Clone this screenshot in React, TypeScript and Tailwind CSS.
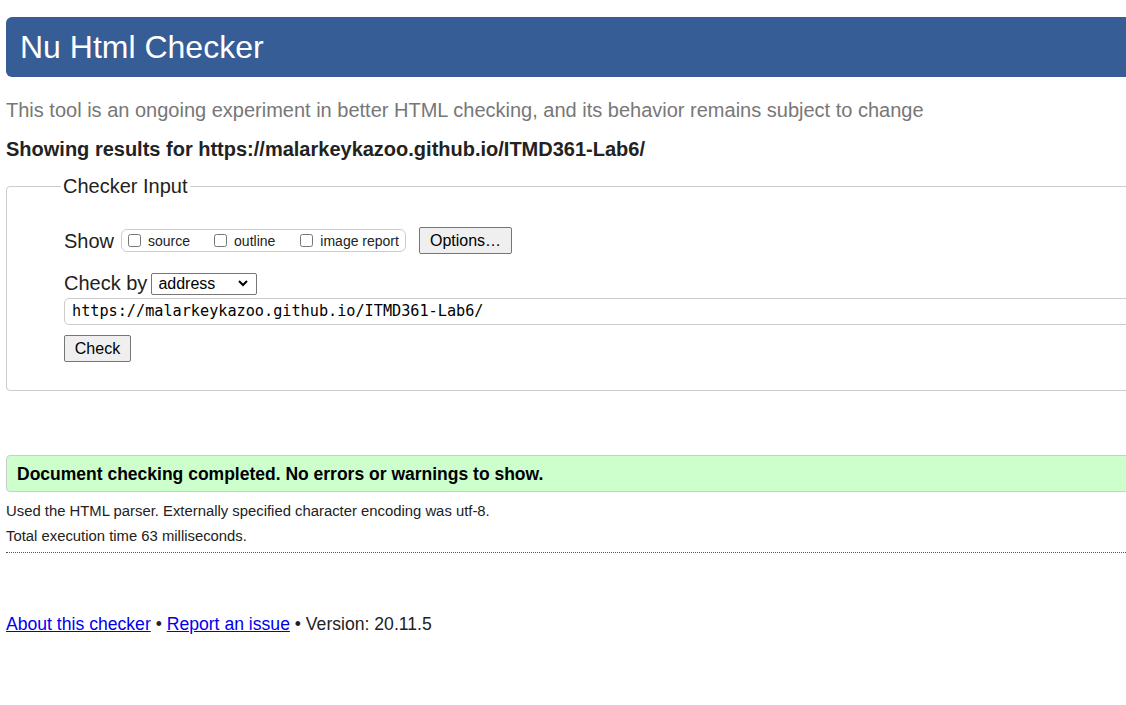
const sans = { fontFamily: '"Liberation Sans", Arial, sans-serif' };

function Check({ label }: { label: string }) {
  return (
    <label className="flex items-center">
      <input type="checkbox" className="m-0 h-[13px] w-[13px]" />
      <span className="ml-[7px] text-[14px] leading-[16px]">{label}</span>
    </label>
  );
}

function NativeButton({ children, className }: { children: React.ReactNode; className: string }) {
  return (
    <button
      className={`h-[27px] rounded-[2px] border border-[#767676] bg-[#efefef] text-[16px] leading-[18px] text-black ${className}`}
    >
      {children}
    </button>
  );
}

export default function App() {
  return (
    <div className="w-[1126px] overflow-hidden bg-white text-[#222]" style={sans}>
      <div className="w-[1180px] px-[6px] pb-[60px]">
        <header className="mt-[17px] flex h-[60px] items-center rounded-l-[6px] bg-[#365d95] pl-[14px]">
          <h1 className="text-[32px] leading-[36px] text-white">Nu Html Checker</h1>
        </header>

        <p className="mt-[21px] text-[20px] leading-[24px] text-[#777]">
          This tool is an ongoing experiment in better HTML checking, and its behavior remains subject to change
        </p>
        <p className="mt-[15px] text-[20px] font-bold leading-[24px]">
          Showing results for https://malarkeykazoo.github.io/ITMD361-Lab6/
        </p>

        <fieldset className="mt-[13px] rounded-[4px] border border-[#ccc] pb-[28px] pl-[54px]">
          <legend className="px-[2px] text-[20px] leading-[24px]">Checker Input</legend>
          <div className="ml-[3px]">
            <div className="mt-[29px] flex h-[27px] items-center">
              <span className="text-[20px] leading-[24px]">Show</span>
              <div className="ml-[7px] flex h-[23px] w-[285px] items-center rounded-[6px] border border-[#ccc] pl-[6px]">
                <Check label="source" />
                <div className="w-[24px]" />
                <Check label="outline" />
                <div className="w-[25px]" />
                <Check label="image report" />
              </div>
              <NativeButton className="ml-[13px] w-[93px]">Options…</NativeButton>
            </div>

            <div className="mt-[18px] flex h-[22px] items-center">
              <span className="text-[20px] leading-[24px]">Check by</span>
              <div className="relative ml-[4px] h-[22px] w-[106px]">
                <select className="h-[22px] w-[106px] appearance-none rounded-[2px] border border-[#767676] bg-white pl-[6px] text-[16px] leading-[18px] text-black">
                  <option>address</option>
                </select>
                <svg
                  className="pointer-events-none absolute right-[9px] top-[8px]"
                  width="10"
                  height="7"
                  viewBox="0 0 10 7"
                  fill="none"
                  stroke="#000"
                  strokeWidth="2"
                >
                  <path d="M1 1l4 4 4-4" />
                </svg>
              </div>
            </div>

            <div className="mt-[4px] flex h-[27px] items-center rounded-[5px] border border-[#ccc] pl-[7px]">
              <span className="text-[15.2px] text-black" style={{ fontFamily: '"DejaVu Sans Mono", monospace' }}>
                https://malarkeykazoo.github.io/ITMD361-Lab6/
              </span>
            </div>

            <NativeButton className="mt-[10px] block w-[67px]">Check</NativeButton>
          </div>
        </fieldset>

        <div className="mt-[64px] flex h-[37px] items-center rounded-l-[4px] border border-[#ccc] bg-[#ccffcc] pl-[10px]">
          <p className="text-[17.5px] font-bold leading-[22px] text-black">
            Document checking completed. No errors or warnings to show.
          </p>
        </div>

        <p className="mt-[10px] text-[14.85px] leading-[18px]">
          Used the HTML parser. Externally specified character encoding was utf-8.
        </p>
        <p className="mt-[7px] text-[14.85px] leading-[18px]">Total execution time 63 milliseconds.</p>
        <div className="mt-[7px] border-b border-dotted border-[#555]" />

        <p className="mt-[60px] text-[17.6px] leading-[22px]">
          <a href="#" className="text-[#0000ee] underline">About this checker</a>
          {' • '}
          <a href="#" className="text-[#0000ee] underline">Report an issue</a>
          {' • Version: 20.11.5'}
        </p>
      </div>
    </div>
  );
}
